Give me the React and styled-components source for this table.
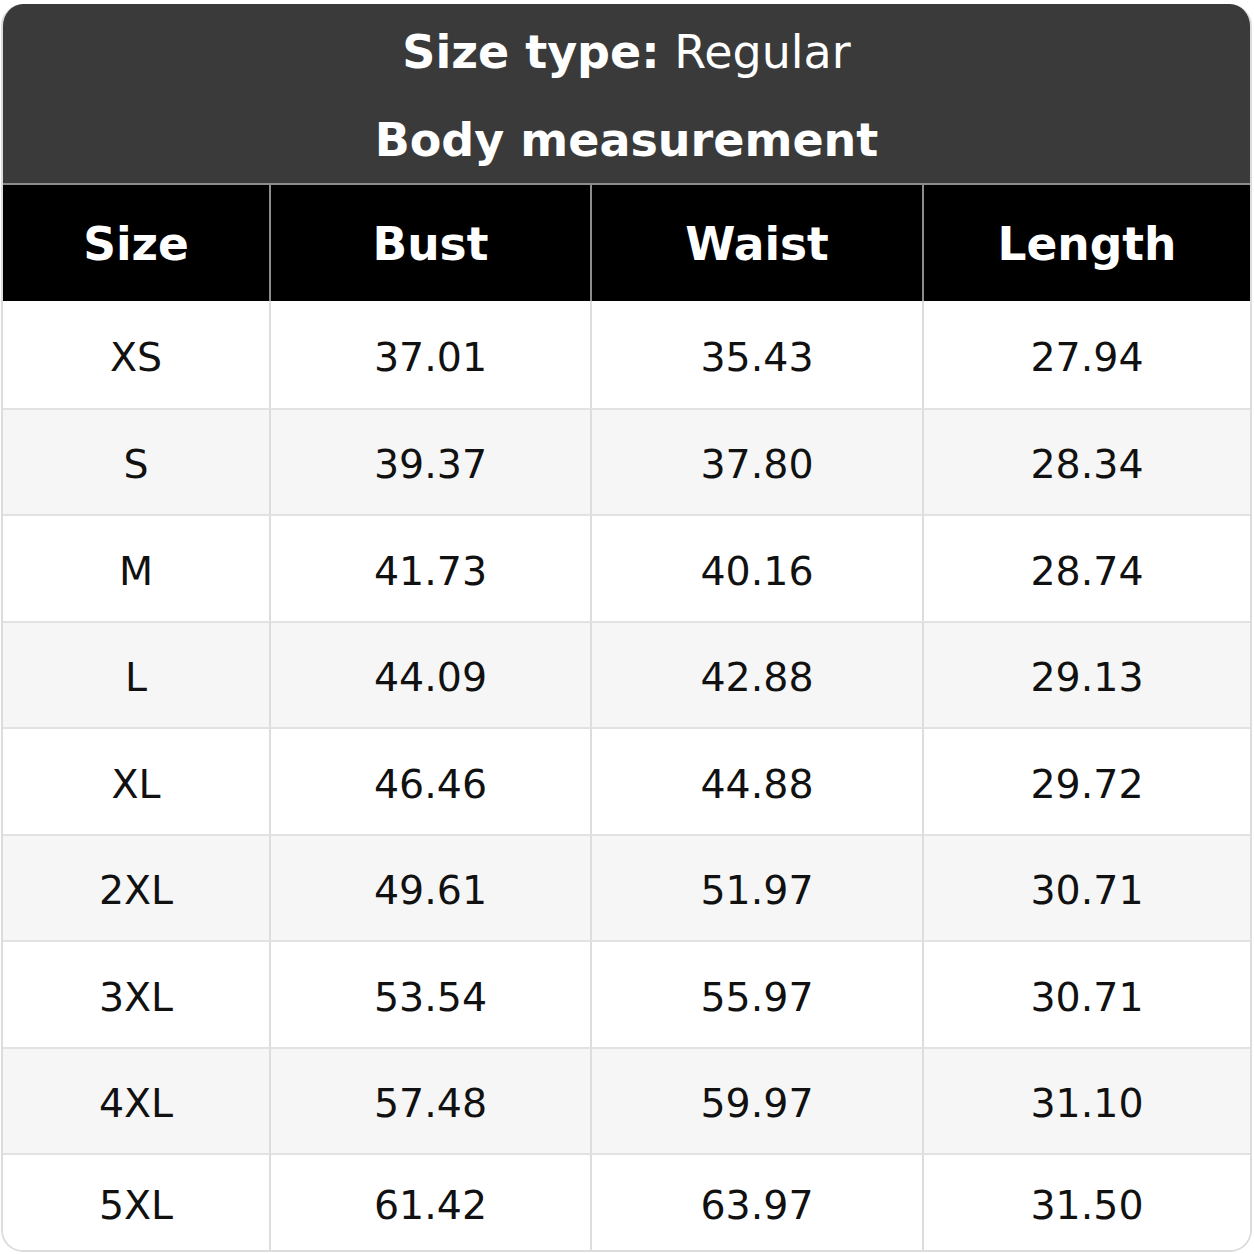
import React from "react";
import styled, { createGlobalStyle } from "styled-components";

const Global = createGlobalStyle`
  html, body { margin: 0; padding: 0; background: #ffffff; }
  body { font-family: "DejaVu Sans", "Liberation Sans", sans-serif; }
`;

const Page = styled.div`
  padding: 4px 2px 2px 1px;
  width: 1254px;
  box-sizing: border-box;
`;

const Card = styled.div`
  width: 1251px;
  height: 1248px;
  box-sizing: border-box;
  border: 2px solid #dcdcdc;
  border-top: none;
  border-radius: 22px;
  overflow: hidden;
  display: flex;
  flex-direction: column;
  background: #ffffff;
`;

const TitleBlock = styled.div`
  height: 181px;
  background: #3a3a3a;
  color: #ffffff;
  display: flex;
  flex-direction: column;
  align-items: center;
  justify-content: center;
  gap: 32px;
  padding-top: 6px;
  box-sizing: border-box;
  border-bottom: 2px solid #8c8c8c;
  flex: none;
`;

const TitleLine = styled.div`
  font-size: 46px;
  line-height: 1.2;
  font-weight: ${(p) => (p.$bold ? 700 : 400)};
  white-space: nowrap;
`;

const Strong = styled.span`
  font-weight: 700;
`;

const Grid = styled.div`
  flex: 1;
  display: grid;
  grid-template-columns: 266px 321px 332px 1fr;
  grid-template-rows: 116px repeat(8, 106.5px) 1fr;
`;

const HeadCell = styled.div`
  background: #000000;
  color: #ffffff;
  font-size: 45.5px;
  font-weight: 700;
  padding-top: 2px;
  box-sizing: border-box;
  display: flex;
  align-items: center;
  justify-content: center;
  border-left: ${(p) => (p.$first ? "none" : "2px solid #8c8c8c")};
`;

const Cell = styled.div`
  background: ${(p) => (p.$alt ? "#f6f6f6" : "#ffffff")};
  color: #111111;
  font-size: 39.5px;
  padding-top: 5px;
  box-sizing: border-box;
  display: flex;
  align-items: center;
  justify-content: center;
  border-left: ${(p) => (p.$first ? "none" : "2px solid #dddddd")};
  border-top: ${(p) => (p.$top ? "none" : "2px solid #e2e2e2")};
`;

const headers = ["Size", "Bust", "Waist", "Length"];
const rows = [
  ["XS", "37.01", "35.43", "27.94"],
  ["S", "39.37", "37.80", "28.34"],
  ["M", "41.73", "40.16", "28.74"],
  ["L", "44.09", "42.88", "29.13"],
  ["XL", "46.46", "44.88", "29.72"],
  ["2XL", "49.61", "51.97", "30.71"],
  ["3XL", "53.54", "55.97", "30.71"],
  ["4XL", "57.48", "59.97", "31.10"],
  ["5XL", "61.42", "63.97", "31.50"],
];

export default function App() {
  return (
    <Page>
      <Global />
      <Card>
        <TitleBlock>
          <TitleLine>
            <Strong>Size type:</Strong> Regular
          </TitleLine>
          <TitleLine $bold>Body measurement</TitleLine>
        </TitleBlock>
        <Grid>
          {headers.map((h, i) => (
            <HeadCell key={h} $first={i === 0}>
              {h}
            </HeadCell>
          ))}
          {rows.map((r, ri) =>
            r.map((v, ci) => (
              <Cell key={ri + "-" + ci} $first={ci === 0} $alt={ri % 2 === 1} $top={ri === 0}>
                {v}
              </Cell>
            ))
          )}
        </Grid>
      </Card>
    </Page>
  );
}
